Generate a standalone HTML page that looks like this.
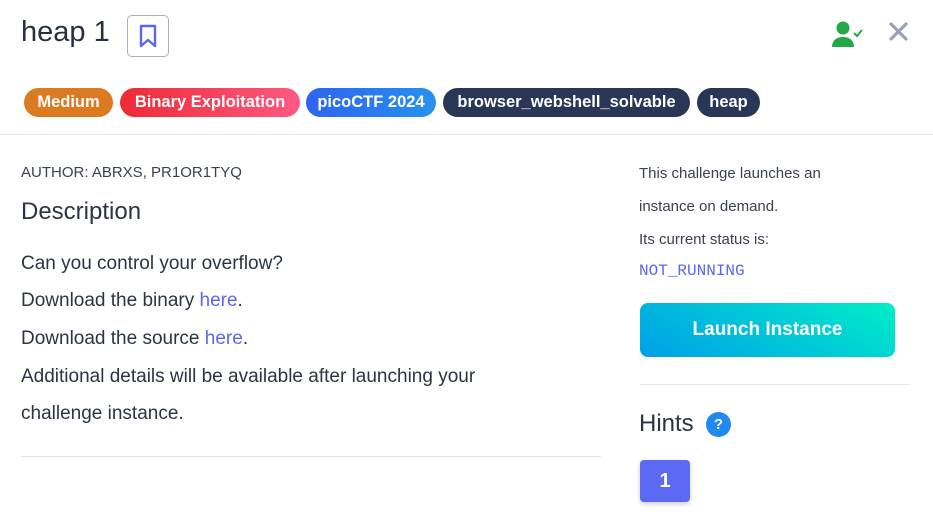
<!DOCTYPE html><html><head><style>
body{margin:0;width:933px;height:516px;background:#fff;font-family:"Liberation Sans",sans-serif;color:#2b3445;position:relative;overflow:hidden}
.a{position:absolute;white-space:nowrap}
.b{position:absolute;top:88px;height:29px;border-radius:15px;color:#fff;font-weight:bold;font-size:16.5px;line-height:29px;text-align:center}
.t{font-size:19px;left:21px}
a{color:#5b67f0;text-decoration:none}
</style></head><body>
<div class="a" style="left:21px;top:16px;font-size:29px;color:#263041">heap 1</div>
<div class="a" style="left:127px;top:15px;width:40px;height:40px;border:1px solid #a9aec0;border-radius:5px"></div>
<svg class="a" style="left:138px;top:24px" width="20" height="24" viewBox="0 0 20 24"><path d="M3 2h14v20l-7-6-7 6z" fill="none" stroke="#5b67f0" stroke-width="2.4" stroke-linejoin="round"/></svg>
<svg class="a" style="left:831px;top:20px" width="34" height="28" viewBox="0 0 34 28"><circle cx="12" cy="8" r="6.5" fill="#22a846"/><path d="M1 27c0-7 5-10 11-10s11 3 11 10z" fill="#22a846"/><path d="M23 13l3 3 5-6" fill="none" stroke="#22a846" stroke-width="2"/></svg>
<svg class="a" style="left:889px;top:22px" width="19" height="19" viewBox="0 0 19 19"><path d="M2 2l15 15M17 2L2 17" stroke="#9aa1b8" stroke-width="3.2" stroke-linecap="round"/></svg>
<div class="b" style="left:24px;width:89px;background:#dc7a22">Medium</div>
<div class="b" style="left:120px;width:180px;background:linear-gradient(90deg,#ee2a36,#fd5a82)">Binary Exploitation</div>
<div class="b" style="left:306px;width:130px;background:linear-gradient(90deg,#2f63f0,#2592ef)">picoCTF 2024</div>
<div class="b" style="left:443px;width:247px;background:#2a3655">browser_webshell_solvable</div>
<div class="b" style="left:697px;width:63px;background:#2a3655">heap</div>
<div class="a" style="left:0;top:134px;width:933px;height:1px;background:#e6e7eb"></div>
<div class="a" style="left:21px;top:164px;font-size:15px;color:#3a4150">AUTHOR: ABRXS, PR1OR1TYQ</div>
<div class="a" style="left:21px;top:198px;font-size:24px">Description</div>
<div class="a t" style="top:253px">Can you control your overflow?</div>
<div class="a t" style="top:290px">Download the binary <a>here</a>.</div>
<div class="a t" style="top:328px">Download the source <a>here</a>.</div>
<div class="a t" style="top:366px">Additional details will be available after launching your</div>
<div class="a t" style="top:403px">challenge instance.</div>
<div class="a" style="left:21px;top:456px;width:580px;height:1px;background:#e3e4e8"></div>
<div class="a" style="left:639px;top:157px;font-size:15px;line-height:33px;color:#3a4150">This challenge launches an<br>instance on demand.<br>Its current status is:</div>
<div class="a" style="left:639px;top:262px;font-size:16px;font-family:'Liberation Mono',monospace;color:#5b67f0">NOT_RUNNING</div>
<div class="a" style="left:640px;top:303px;width:255px;height:54px;border-radius:8px;background:linear-gradient(30deg,#00a0e6,#00cdd6 60%,#00efc6);color:#fff;font-weight:bold;font-size:19px;line-height:54px;text-align:center">Launch Instance</div>
<div class="a" style="left:640px;top:384px;width:270px;height:1px;background:#e6e7eb"></div>
<div class="a" style="left:639px;top:410px;font-size:24px">Hints</div>
<div class="a" style="left:706px;top:412px;width:25px;height:25px;border-radius:50%;background:#2089f2;color:#fff;font-weight:bold;font-size:15px;line-height:25px;text-align:center">?</div>
<div class="a" style="left:640px;top:460px;width:50px;height:42px;border-radius:4px;background:#5c69f3;color:#fff;font-weight:bold;font-size:20px;line-height:42px;text-align:center;box-shadow:0 2px 5px rgba(0,0,0,.2)">1</div>
</body></html>
